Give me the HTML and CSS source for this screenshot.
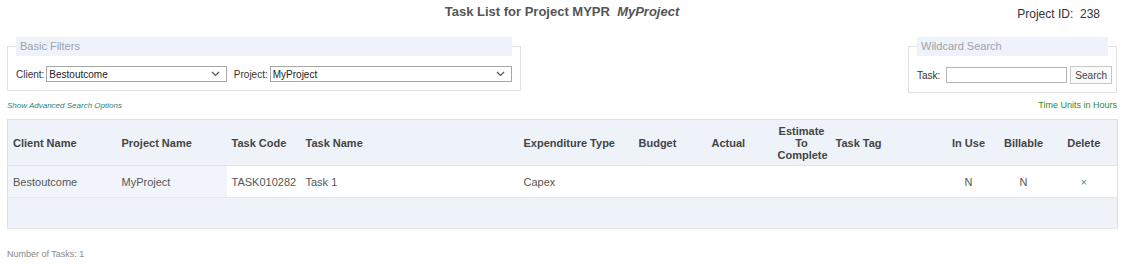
FILE: index.html
```html
<!DOCTYPE html>
<html lang="en">
<head>
    <meta charset="UTF-8">
    <title>Task List</title>
    <link rel="stylesheet" href="styles.css">
</head>
<body>
    <div class="page">
        <div class="top">
            <span></span>
            <h2>Task List for Project MYPR&nbsp;&nbsp;<em>MyProject</em></h2>
            <div class="project-id">Project ID:&nbsp;&nbsp;238</div>
        </div>

        <div class="filters">
            <fieldset class="basic">
                <legend>Basic Filters</legend>
                <div class="row">
                    <label>Client:</label>
                    <div class="select client">
                        <span>Bestoutcome</span>
                        <svg width="9" height="6" viewBox="0 0 9 6"><path d="M1 1 L4.5 4.5 L8 1" fill="none" stroke="#555" stroke-width="1.2"/></svg>
                    </div>
                    <label class="gap">Project:</label>
                    <div class="select project">
                        <span>MyProject</span>
                        <svg width="9" height="6" viewBox="0 0 9 6"><path d="M1 1 L4.5 4.5 L8 1" fill="none" stroke="#555" stroke-width="1.2"/></svg>
                    </div>
                </div>
            </fieldset>

            <fieldset class="wildcard">
                <legend>Wildcard Search</legend>
                <div class="row">
                    <label>Task:</label>
                    <input type="text" class="task-input">
                    <button>Search</button>
                </div>
            </fieldset>
        </div>

        <div class="links">
            <a class="advanced">Show Advanced Search Options</a>
            <span class="units">Time Units in Hours</span>
        </div>

        <table class="tasks">
            <colgroup>
                <col style="width:109px"><col style="width:110px"><col style="width:74px"><col style="width:218px">
                <col style="width:115px"><col style="width:73px"><col style="width:66px"><col style="width:58px">
                <col style="width:110px"><col style="width:56px"><col style="width:54px"><col style="width:67px">
            </colgroup>
            <thead>
                <tr>
                    <th>Client Name</th>
                    <th>Project Name</th>
                    <th>Task Code</th>
                    <th>Task Name</th>
                    <th>Expenditure Type</th>
                    <th>Budget</th>
                    <th>Actual</th>
                    <th class="center">Estimate To Complete</th>
                    <th>Task Tag</th>
                    <th class="center">In Use</th>
                    <th class="center">Billable</th>
                    <th class="center">Delete</th>
                </tr>
            </thead>
            <tbody>
                <tr>
                    <td class="frozen">Bestoutcome</td>
                    <td class="frozen">MyProject</td>
                    <td>TASK010282</td>
                    <td>Task 1</td>
                    <td>Capex</td>
                    <td></td>
                    <td></td>
                    <td></td>
                    <td></td>
                    <td class="center">N</td>
                    <td class="center">N</td>
                    <td class="center del">&times;</td>
                </tr>
                <tr class="empty">
                    <td colspan="12"></td>
                </tr>
            </tbody>
        </table>

        <div class="count">Number of Tasks: 1</div>
    </div>
</body>
</html>
```

FILE: styles.css
```css
body {
    margin: 0;
    font-family: "Liberation Sans", Arial, sans-serif;
    color: #444;
    background: #fff;
}
.page {
    padding: 0 5px 0 7px;
}
.top {
    display: grid;
    grid-template-columns: 1fr auto 1fr;
    align-items: start;
    height: 37px;
}
.top h2 {
    margin: 4px 0 0;
    font-size: 13px;
    color: #555;
    font-weight: bold;
}
.project-id {
    justify-self: end;
    margin: 7px 17px 0 0;
    font-size: 12px;
    color: #333;
}
.filters {
    display: flex;
    justify-content: space-between;
    align-items: flex-start;
}
fieldset {
    margin: 0;
    padding: 10px 8px 8px;
    border: 1px solid #e2e2e2;
    min-width: 0;
}
legend {
    width: 100%;
    box-sizing: border-box;
    background: #edf2fb;
    color: #a0a4aa;
    font-size: 11px;
    padding: 3px 4px 4px;
    line-height: 12px;
}
fieldset.basic {
    width: 496px;
}
fieldset.wildcard {
    width: 191px;
}
.row {
    display: flex;
    align-items: center;
    font-size: 10px;
    color: #333;
}
.row label {
    margin-right: 2px;
}
.row label.gap {
    margin-left: 7px;
}
.select {
    display: flex;
    justify-content: space-between;
    align-items: center;
    height: 16px;
    box-sizing: border-box;
    border: 1px solid #a8a8a8;
    padding: 0 6px 0 2px;
    font-size: 10px;
    color: #222;
    background: #fff;
}
.select.client {
    width: 181px;
}
.select.project {
    width: 243px;
}
.task-input {
    width: 121px;
    height: 16px;
    box-sizing: border-box;
    border: 1px solid #b5b5b5;
    margin: 0 3px 0 4px;
    padding: 0;
}
button {
    height: 18px;
    padding: 0 4px;
    font-family: inherit;
    font-size: 10px;
    color: #444;
    background: #fafafa;
    border: 1px solid #c8c8c8;
}
.links {
    display: flex;
    justify-content: space-between;
    align-items: center;
    margin-top: 6px;
    height: 12px;
}
.advanced {
    font-size: 8px;
    font-style: italic;
    color: #2b7f80;
}
.units {
    font-size: 9px;
    color: #2f8a2f;
}
.tasks {
    margin-top: 8px;
    width: 1110px;
    table-layout: fixed;
    border-collapse: collapse;
    border: 1px solid #dde1e6;
    font-size: 11px;
}
.tasks th {
    background: #eef3fa;
    color: #444;
    text-align: left;
    height: 45px;
    padding: 0 5px;
    line-height: 12px;
    border-bottom: 1px solid #e0e5ec;
}
.tasks td {
    height: 31px;
    padding: 0 5px;
    color: #555;
    border-bottom: 1px solid #e4e7eb;
}
.tasks .center {
    text-align: center;
}
.tasks td.frozen {
    background: #f1f5fb;
}
.tasks td.del {
    color: #777;
}
.tasks tr.empty td {
    background: #eef3fa;
    height: 30px;
}
.count {
    margin-top: 20px;
    font-size: 9px;
    color: #888;
}
```
